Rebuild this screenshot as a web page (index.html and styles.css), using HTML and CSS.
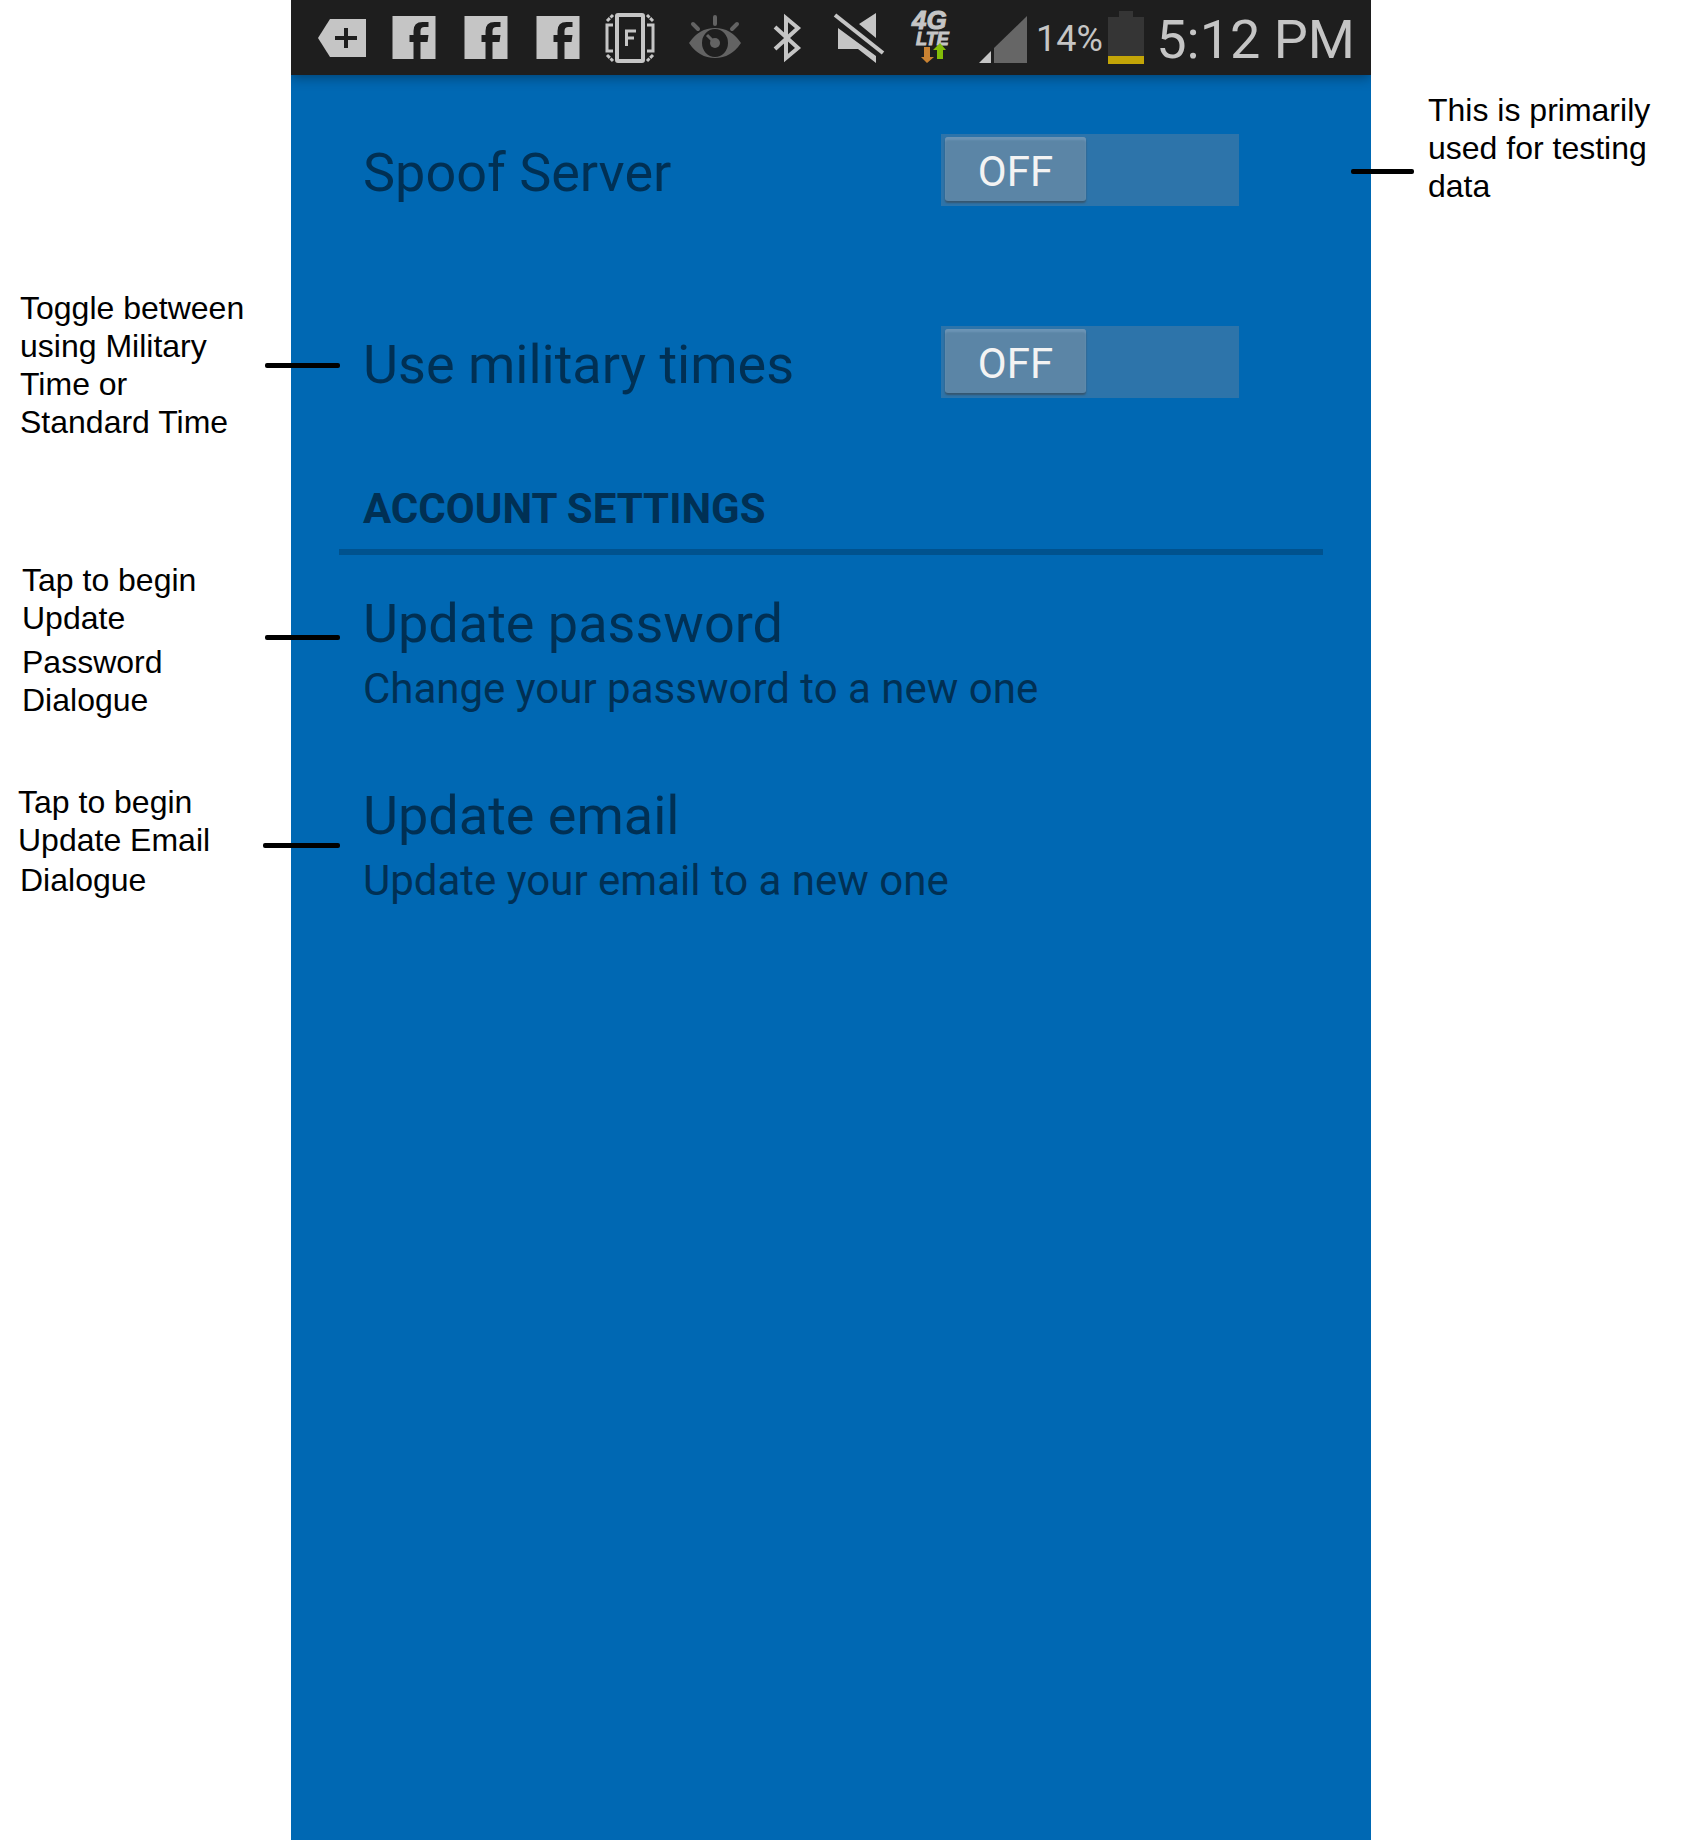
FILE: index.html
```html
<!DOCTYPE html>
<html lang="en">
<head>
<meta charset="utf-8">
<title>Settings guide</title>
<link rel="stylesheet" href="styles.css">
</head>
<body>
<div class="guide">
  <aside class="notes notes-left">
    <div class="note note-time">
      <p>Toggle between<br>using Military<br>Time or<br>Standard Time</p>
      <span class="leader"></span>
    </div>
    <div class="note note-password">
      <p>Tap to begin<br>Update</p>
      <p class="note-more">Password<br>Dialogue</p>
      <span class="leader"></span>
    </div>
    <div class="note note-email">
      <p>Tap to begin<br>Update Email</p>
      <p class="note-more">Dialogue</p>
      <span class="leader"></span>
    </div>
  </aside>

  <main class="phone">
    <header class="status">
      <div class="icons">
        <svg height="40" viewBox="0 0 48 40"><path d="M0 20 12 1h36v38H12z" fill="#c5c5c5"/><path d="M17 20h22M28 10v20" stroke="#1e1e1e" stroke-width="4"/></svg>
        <svg height="43" viewBox="0 0 43 43"><path d="M0 0h43v43H28V26h7l1-7h-8v-4q0-4 4-4h4V6h-6q-9 0-9 9v4h-4v7h4v17H0z" fill="#c5c5c5"/></svg>
        <svg height="43" viewBox="0 0 43 43"><path d="M0 0h43v43H28V26h7l1-7h-8v-4q0-4 4-4h4V6h-6q-9 0-9 9v4h-4v7h4v17H0z" fill="#c5c5c5"/></svg>
        <svg height="43" viewBox="0 0 43 43"><path d="M0 0h43v43H28V26h7l1-7h-8v-4q0-4 4-4h4V6h-6q-9 0-9 9v4h-4v7h4v17H0z" fill="#c5c5c5"/></svg>
        <svg height="50" viewBox="0 0 50 50" fill="none" stroke="#c5c5c5"><rect x="12" y="2" width="26" height="46" rx="1" stroke-width="4"/><path d="M8 12H2v26h6M42 12h6v26h-6" stroke-width="3"/><path d="m2 8 6-6M48 8l-6-6M2 42l6 6M48 42l-6 6" stroke-width="3" stroke-dasharray="4 1"/><path d="M21.500 33V18H31M21.500 25H29" stroke-width="3"/></svg>
      </div>
      <div class="icons system">
        <svg height="46" viewBox="0 0 52 46" fill="#636363"><path fill-rule="evenodd" d="M0 28Q10 13 26 13t26 15Q42 43 26 43T0 28zm39 0a13 14 0 1 0-26 0 13 14 0 0 0 26 0z"/><circle cx="26" cy="28" r="5"/><path d="M26 2v7M4 9l5 5M48 9l-5 5" stroke="#636363" stroke-width="4" stroke-linecap="round"/><path d="m18 20 6 6" stroke="#636363" stroke-width="3"/></svg>
        <svg height="48" viewBox="0 0 28 48" fill="none" stroke="#c5c5c5" stroke-width="4"><path d="M2 13 25 34 13 44V4l12 10L2 35"/></svg>
        <svg height="50" viewBox="0 0 50 50"><path d="M25 11 42 0v25zM4 15l38 28v7L24 36H4z" fill="#c5c5c5"/><path d="m1 2 48 38" stroke="#c5c5c5" stroke-width="4"/></svg>
        <svg height="65" viewBox="0 -5 40 65"><g fill="#c5c5c5" stroke="#c5c5c5" font-family="Liberation Sans, sans-serif" font-weight="bold" font-style="italic"><text x="1" y="19" font-size="26">4G</text><text x="5" y="35" font-size="18">LTE</text></g><path d="M13 37h6v10h4l-7 6-6-6h3z" fill="#c98232"/><path d="M26 49V40h-4l7-7 6 7h-3v9z" fill="#84bd08"/></svg>
        <svg height="46" viewBox="0 0 48 46"><path d="M0 48 12 36v12z" fill="#c5c5c5"/><path d="M15 48V33L48 1v47z" fill="#666"/></svg>
      </div>
      <span class="percent">14%</span>
      <svg class="battery" width="36" height="53" viewBox="0 0 36 53"><path d="M11 0h14v6h11v40H0V6h11z" fill="#353535"/><path d="M0 45h36v8H0z" fill="#c3a507"/></svg>
      <time class="clock">5:12 PM</time>
    </header>

    <div class="settings">
      <div class="row toggle-row">
        <label class="title" for="spoof">Spoof Server</label>
        <button class="switch" id="spoof" type="button" role="switch" aria-checked="false"><span class="thumb">OFF</span></button>
      </div>
      <div class="row toggle-row">
        <label class="title" for="military">Use military times</label>
        <button class="switch" id="military" type="button" role="switch" aria-checked="false"><span class="thumb">OFF</span></button>
      </div>
      <h2 class="section">ACCOUNT SETTINGS</h2>
      <button class="row action" type="button"><span class="title">Update password</span><span class="summary">Change your password to a new one</span></button>
      <button class="row action" type="button"><span class="title">Update email</span><span class="summary">Update your email to a new one</span></button>
    </div>
  </main>

  <aside class="notes notes-right">
    <div class="note note-spoof">
      <p>This is primarily<br>used for testing<br>data</p>
      <span class="leader"></span>
    </div>
  </aside>
</div>
</body>
</html>
```
FILE: styles.css
```css
* { box-sizing: border-box; }
body { margin: 0; background: #fff; }
p, h2 { margin: 0; }
button { border: 0; padding: 0; background: none; color: inherit; font: inherit; text-align: left; cursor: pointer; }

.guide {
  display: grid;
  grid-template-columns: 291px minmax(0, 1fr) 337px;
  min-height: 100vh;
}

/* Callouts */
.notes {
  display: flex;
  flex-direction: column;
  font: 32px/38px "Liberation Sans", Arial, sans-serif;
  color: #000;
  white-space: nowrap;
}
.notes-left { padding: 289px 0 0 18px; }
.notes-right { padding: 91px 0 0 57px; }
.note { position: relative; }
.note-time { padding-left: 2px; }
.note-password { margin-top: 120px; padding-left: 4px; }
.note-password .note-more { padding-top: 6px; }
.note-email { margin-top: 64px; }
.note-email .note-more { padding: 2px 0 0 2px; }
.leader {
  position: absolute;
  z-index: 1;
  right: -49px;
  top: 74px;
  width: 75px;
  height: 5px;
  border-radius: 2px;
  background: #000;
}
.note-email .leader { top: 60px; width: 77px; }
.note-spoof .leader { top: 78px; right: auto; left: -77px; width: 63px; }

/* Phone */
.phone {
  background: #0068b3;
  color: #003054;
  font-family: Roboto, sans-serif;
}
.status {
  display: flex;
  align-items: center;
  height: 75px;
  padding: 0 16px 0 21px;
  background: #1e1e1e;
  color: #c5c5c5;
  box-shadow: 0 2px 12px rgba(0, 0, 0, .4);
  clip-path: inset(0 0 -16px 0);
}
.icons { display: flex; align-items: center; gap: 12px; }
.icons svg { width: 60px; overflow: visible; }
.system { margin-left: 25px; }
.percent { margin-left: 3px; padding-top: 2px; font-size: 36px; }
.battery { margin-left: auto; }
.clock { margin-left: 12px; padding-top: 4px; font-size: 54px; line-height: 70px; white-space: nowrap; }

.settings { display: flex; flex-direction: column; padding: 0 48px; }
.row { display: flex; height: 192px; padding: 0 24px; }
.title { font-size: 54px; line-height: 64px; }
.summary { font-size: 42px; line-height: 50px; }
.toggle-row { align-items: center; justify-content: space-between; padding-right: 84px; }
.toggle-row .title { padding-top: 4px; }
.action { flex-direction: column; justify-content: center; gap: 8px; padding-top: 4px; }
.section {
  height: 96px;
  padding: 25px 24px 0;
  border-bottom: 6px solid #00528e;
  font-size: 42px;
  line-height: 50px;
}
.switch { display: flex; width: 298px; height: 72px; margin-bottom: 2px; padding: 3px 4px; background: #2d74aa; }
.thumb {
  width: 141px;
  height: 64px;
  border-radius: 3px;
  background: #5b85a6;
  box-shadow: inset 0 3px 2px #6c94b5, 0 2px 2px #35566f;
  color: #f3f3f3;
  font-size: 42px;
  line-height: 70px;
  text-align: center;
}
```
